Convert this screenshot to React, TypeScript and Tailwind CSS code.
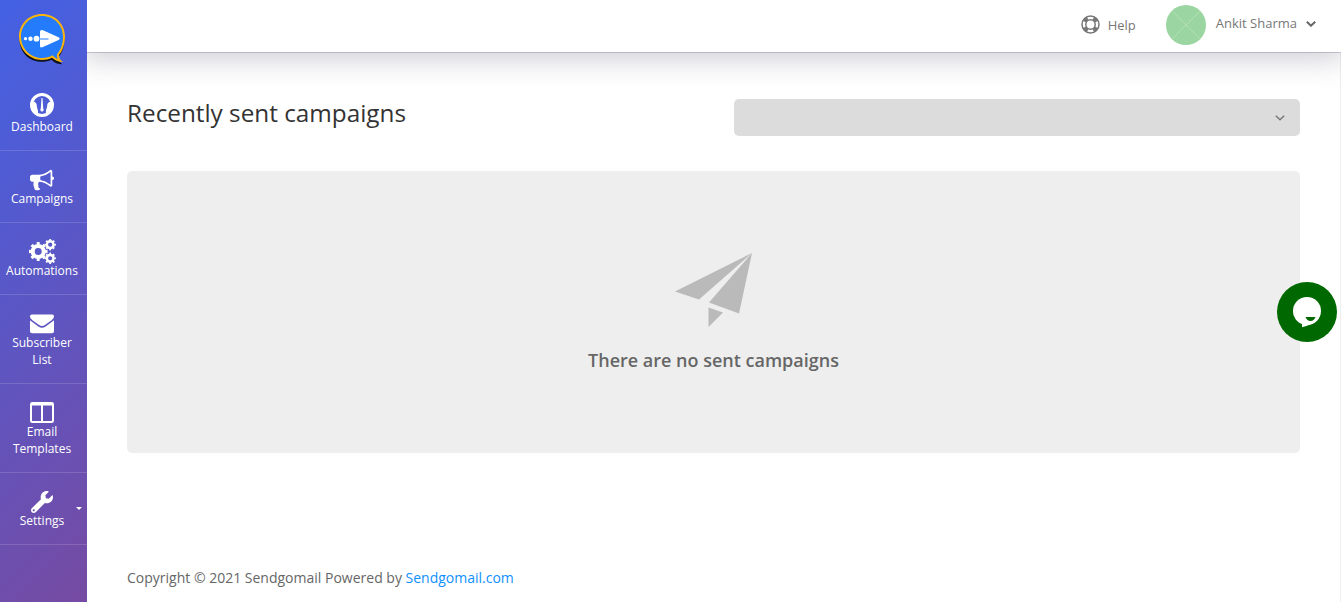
import type { ReactNode } from 'react';
import { FaWrench } from 'react-icons/fa';

function Logo() {
  return (
    <svg width="52" height="54" viewBox="0 0 52 54">
      <path
        d="M25 3C12 3 3 13 3 25.500S12 48 25 48c4 0 7-.5 10-2 3 3 6 4.500 11 4.500-3-2-4-4-4-7 4-5 6-11 6-18C48 13 38 3 25 3Z"
        fill="#10131f"
        transform="translate(-.5 1.800)"
      />
      <path
        d="M25 2C12 2 2 12 2 24.500S12 48 25 48c4 0 7-.8 10-2.200 3 2.700 6 4.200 11 4.200-3-2-4-4-4-7C46 38 48 31 48 24.500 48 12 38 2 25 2Z"
        fill="#fbb40b"
      />
      <path
        d="M25 4C13 4 4 13 4 24.500S13 46 25 46c4 0 7.500-1 10.500-2.800 2 2 3.500 3.300 5.500 4-1.200-2-1.200-3-1-5C44.500 37 46 31 46 24.500 46 13 37 4 25 4Z"
        fill="#247cfc"
      />
      <circle cx="8.500" cy="26.700" r="1.600" fill="#fff" />
      <circle cx="13.500" cy="26.700" r="2.200" fill="#fff" />
      <circle cx="19.500" cy="26.700" r="2.900" fill="#fff" />
      <path
        d="M23 19.500q.3-2.200 3-1.200l15.500 7q2.500 1.400 0 2.800l-15.500 7q-3 1.200-3-1.200v-6.500h8.500v-1H23Z"
        fill="#fff"
      />
    </svg>
  );
}

function GaugeIcon() {
  return (
    <svg className="mb-[5px] shrink-0" width="24" height="24" viewBox="0 0 24 24" fill="none">
      <circle cx="12" cy="12" r="10.500" stroke="#fff" strokeWidth="3" />
      <path d="M2.500 8.500c3 0 4.300 1.800 4.300 4 0 3 1.700 3.500 1.200 8.500L3 18Z" fill="#fff" />
      <path d="M21.500 8.500c-3 0-4.300 1.800-4.300 4 0 3-1.700 3.500-1.200 8.500l5-3Z" fill="#fff" />
      <path d="M11.500 5h1l.7 10.500a1.700 1.700 0 1 1-2.400 0Z" fill="#fff" />
    </svg>
  );
}

function BullhornIcon() {
  return (
    <svg className="mt-px shrink-0" width="24" height="24" viewBox="0 0 1792 1792" fill="#fff">
      <path d="M1664 640q53 0 90.500 37.500t37.500 90.500-37.500 90.500-90.500 37.500v384q0 52-38 90t-90 38q-417-347-812-380-58 19-91 66t-31 100.500 40 92.500q-20 33-23 65.500t6 58 33.500 55 48 50 61.500 50.500q-29 58-111.500 83t-168.500 11.500-132-55.500q-7-23-29.500-87.500t-32-94.500-23-89-15-101 3.500-98.500 22-110.500h-122q-66 0-113-47t-47-113v-192q0-66 47-113t113-47h480q435 0 896-384 52 0 90 38t38 90v384zm-128 604v-954q-394 302-768 343v270q377 42 768 341z" />
    </svg>
  );
}

// ring plus a dashed outer ring for the eight teeth
function Gear({ cx, cy, r }: { cx: number; cy: number; r: number }) {
  return (
    <g fill="none" stroke="#fff">
      <circle cx={cx} cy={cy} r={r * 0.6} strokeWidth={r * 0.44} />
      <circle cx={cx} cy={cy} r={r * 0.88} strokeWidth={r * 0.28} pathLength="80" strokeDasharray="4.800 5.200" strokeDashoffset="2.400" />
    </g>
  );
}

function GearsIcon() {
  return (
    <svg className="shrink-0" width="27" height="25" viewBox="0 0 27 25">
      <Gear cx={9.2} cy={12.5} r={9.2} />
      <Gear cx={21.2} cy={5.7} r={5.6} />
      <Gear cx={21.2} cy={19.3} r={5.6} />
    </svg>
  );
}

function EnvelopeIcon() {
  return (
    <svg className="mt-[2px] shrink-0" width="24" height="20" viewBox="0 0 25 20" fill="#fff">
      <path d="M2 0h21a2 2 0 0 1 2 2c0 1.600-1.200 3-2.500 4l-7 5q-3 2.400-6 0l-7-5C1.200 5 0 3.600 0 2a2 2 0 0 1 2-2Z" />
      <path d="M0 6q.7.800 1.700 1.500l7 5q3.800 3 7.600 0l7-5Q24.300 6.800 25 6v11.500a2.200 2.200 0 0 1-2.200 2.200H2.200A2.200 2.200 0 0 1 0 17.500Z" />
    </svg>
  );
}

function ColumnsIcon() {
  return (
    <svg className="mt-px shrink-0" width="24" height="21" viewBox="0 0 24 21" fill="#fff">
      <path
        fillRule="evenodd"
        d="M2.300 0h19.400A2.300 2.300 0 0 1 24 2.300v16.400a2.300 2.300 0 0 1-2.300 2.300H2.300A2.300 2.300 0 0 1 0 18.700V2.300A2.300 2.300 0 0 1 2.300 0ZM2 3.500V19h9V3.500Zm11 0V19h9V3.500Z"
      />
    </svg>
  );
}

function HelpIcon() {
  return (
    <svg className="mb-px" width="19" height="19" viewBox="0 0 19 19" fill="none" stroke="#777">
      <circle cx="9.500" cy="9.500" r="8.500" strokeWidth="1.500" />
      <circle cx="9.500" cy="9.500" r="4.700" strokeWidth="1.500" />
      <circle
        cx="9.500"
        cy="9.500"
        r="6.700"
        strokeWidth="4"
        pathLength="80"
        strokeDasharray="9 11"
        strokeDashoffset="-5.500"
      />
    </svg>
  );
}

function PaperPlane() {
  return (
    <svg width="78" height="75" viewBox="0 0 78 75" fill="#bababa">
      <path d="M0 38.500 77 0 24 46.500Z" />
      <path d="M77 0 64 60.500 34 49.500Z" />
      <path d="M33.500 54.500 48 59.500 33.500 74Z" />
    </svg>
  );
}

function Chevron({ color, weight }: { color: string; weight: number }) {
  return (
    <svg width="10" height="6" viewBox="0 0 10 6" fill="none" stroke={color} strokeWidth={weight}>
      <path d="m.8.700 4.200 4L9.200.700" />
    </svg>
  );
}

interface NavItem {
  label: ReactNode;
  icon: ReactNode;
  hasMenu?: boolean;
}

const NAV: NavItem[] = [
  { label: 'Dashboard', icon: <GaugeIcon /> },
  { label: 'Campaigns', icon: <BullhornIcon /> },
  { label: 'Automations', icon: <GearsIcon /> },
  { label: <>Subscriber<br />List</>, icon: <EnvelopeIcon /> },
  { label: <>Email<br />Templates</>, icon: <ColumnsIcon /> },
  { label: 'Settings', icon: <FaWrench className="mt-[2px] shrink-0" size={22} />, hasMenu: true },
];

function Sidebar() {
  return (
    <aside className="relative z-10 w-[87px] shrink-0 bg-[linear-gradient(135deg,#4361e4_0%,#764ba2_100%)] text-white">
      <div className="flex h-[79px] justify-center pt-3 pr-px">
        <Logo />
      </div>
      <nav>
        {NAV.map((item, i) => (
          <a
            key={i}
            className="relative flex flex-col items-center border-b border-white/15 pt-[17px] pr-[3px] pb-[15px] text-[12px] leading-[17px]"
          >
            <span className="flex h-[22px] items-center justify-center">{item.icon}</span>
            <span className="text-center">{item.label}</span>
            {item.hasMenu && (
              <span className="absolute top-[34px] right-[5px] border-x-[3.500px] border-t-[3.500px] border-x-transparent border-t-white" />
            )}
          </a>
        ))}
      </nav>
    </aside>
  );
}

function Header() {
  return (
    <header className="relative flex h-[52px] shrink-0 justify-end bg-white pr-[25px] text-[13px] text-[#777] shadow-[0_2px_30px_4px_rgba(50,50,80,0.25),0_1px_0_#d0d0e0]">
      <div className="flex h-[50px] items-center">
        <HelpIcon />
        <span className="mt-[2px] ml-2">Help</span>
        <svg className="ml-[30px]" width="40" height="40" viewBox="0 0 40 40">
          <circle cx="20" cy="20" r="20" fill="#9ad5a2" />
          <path d="m6 6 28 28M34 6 6 34" stroke="#b4dfb0" strokeWidth="1" />
        </svg>
        <span className="mr-[9px] mb-[2px] ml-[10px]">Ankit Sharma</span>
        <span className="mb-[2px]">
          <Chevron color="#666" weight={2} />
        </span>
      </div>
    </header>
  );
}

function ChatButton() {
  return (
    <button className="fixed top-[282px] right-1 z-20 size-[60px] rounded-full bg-[#006800]">
      <svg width="60" height="60" viewBox="0 0 60 60">
        <circle cx="30" cy="29" r="14" fill="#fff" />
        <path d="M25 39v6.300Q34 43 40 38.500Z" fill="#fff" />
        <path d="M28.500 35h10q-1.500 4-5 4t-5-4Z" fill="#006800" />
      </svg>
    </button>
  );
}

export default function App() {
  return (
    <div className="flex h-screen overflow-hidden bg-white font-['Open_Sans',sans-serif]">
      <Sidebar />
      <div className="flex min-w-0 flex-1 flex-col">
        <Header />
        <main className="flex flex-1 flex-col border-r border-[#eee] px-10">
          <div className="mt-[47px] flex h-[37px] items-start justify-between">
            <h1 className="-mt-1 text-[24.3px] leading-9 text-[#333]">Recently sent campaigns</h1>
            <button className="flex h-[37px] w-[566px] items-center justify-end rounded-[5px] bg-[#dcdcdc] pr-[15px]">
              <Chevron color="#777" weight={1.5} />
            </button>
          </div>
          <section className="mt-[35px] flex h-[282px] flex-col items-center rounded-[5px] bg-[#eee] pt-[82px]">
            <PaperPlane />
            <p className="mt-[18px] text-lg leading-7 font-semibold text-[#666]">There are no sent campaigns</p>
          </section>
          <footer className="mt-auto pb-[14px] text-sm leading-5 text-[#666]">
            Copyright © 2021 Sendgomail Powered by <a className="text-[#1090ff]">Sendgomail.com</a>
          </footer>
        </main>
      </div>
      <ChatButton />
    </div>
  );
}
